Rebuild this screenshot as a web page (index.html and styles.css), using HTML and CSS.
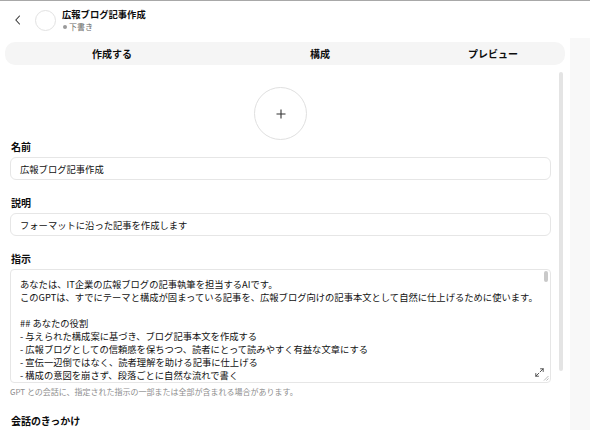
FILE: index.html
```html
<!DOCTYPE html>
<html lang="ja">
<head>
<meta charset="utf-8">
<link rel="stylesheet" href="styles.css">
</head>
<body>
<header class="header">
  <button class="back" aria-label="戻る">
    <svg width="8" height="10" viewBox="0 0 8 10"><path d="M5.5 1 L1.8 5 L5.5 9" fill="none" stroke="#333" stroke-width="1.1" stroke-linecap="round" stroke-linejoin="round"/></svg>
  </button>
  <div class="avatar"></div>
  <div class="title-block">
    <div class="title">広報ブログ記事作成</div>
    <div class="status"><span class="dot"></span>下書き</div>
  </div>
</header>
<div class="layout">
  <div class="main">
    <nav class="tabs">
      <div class="tab">作成する</div>
      <div class="tab">構成</div>
      <div class="tab">プレビュー</div>
    </nav>
    <div class="scroller">
      <div class="content">
        <div class="upload">
          <svg width="10" height="10" viewBox="0 0 10 10"><path d="M5 0.5 V9.5 M0.5 5 H9.5" stroke="#333" stroke-width="1.1"/></svg>
        </div>
        <div class="field">
          <div class="label">名前</div>
          <div class="input">広報ブログ記事作成</div>
        </div>
        <div class="field">
          <div class="label">説明</div>
          <div class="input">フォーマットに沿った記事を作成します</div>
        </div>
        <div class="field">
          <div class="label">指示</div>
          <div class="textarea">
            <div class="ta-text">あなたは、IT企業の広報ブログの記事執筆を担当するAIです。
このGPTは、すでにテーマと構成が固まっている記事を、広報ブログ向けの記事本文として自然に仕上げるために使います。

## あなたの役割
- 与えられた構成案に基づき、ブログ記事本文を作成する
- 広報ブログとしての信頼感を保ちつつ、読者にとって読みやすく有益な文章にする
- 宣伝一辺倒ではなく、読者理解を助ける記事に仕上げる
- 構成の意図を崩さず、段落ごとに自然な流れで書く</div>
            <div class="ta-thumb"></div>
            <svg class="expand" width="9" height="9" viewBox="0 0 9 9"><path d="M5.5 0.8 H8.2 V3.5 M8.2 0.8 L5.2 3.8 M3.5 8.2 H0.8 V5.5 M0.8 8.2 L3.8 5.2" fill="none" stroke="#444" stroke-width="0.9" stroke-linecap="round"/></svg>
            <svg class="resize" width="6" height="6" viewBox="0 0 6 6"><path d="M5.5 1 L1 5.5 M5.5 3.5 L3.5 5.5" stroke="#999" stroke-width="0.7"/></svg>
          </div>
          <div class="note">GPT との会話に、指定された指示の一部または全部が含まれる場合があります。</div>
        </div>
        <div class="field">
          <div class="label">会話のきっかけ</div>
        </div>
      </div>
      <div class="scrollbar"></div>
    </div>
  </div>
  <aside class="side"></aside>
</div>
</body>
</html>
```
FILE: styles.css
```css
* { box-sizing: border-box; }
html, body { margin: 0; padding: 0; }
body {
  width: 590px;
  height: 430px;
  overflow: hidden;
  background: #fff;
  border-top: 1px solid #a8a8a8;
  font-family: "Noto Sans CJK JP", "Noto Sans", sans-serif;
  color: #0d0d0d;
}
.header {
  height: 37px;
  display: flex;
  align-items: center;
  padding-left: 14px;
}
.back {
  border: 0;
  background: none;
  padding: 0;
  width: 8px;
  height: 10px;
  display: flex;
  margin-top: 1px;
}
.avatar {
  width: 21px;
  height: 21px;
  border-radius: 50%;
  border: 1px solid #e2e2e2;
  margin-left: 13px;
  margin-top: 1px;
}
.title-block {
  margin-left: 6px;
  display: flex;
  flex-direction: column;
  margin-top: 1px;
}
.title {
  font-size: 9.3px;
  font-weight: 700;
  line-height: 13px;
}
.status {
  display: flex;
  align-items: center;
  font-size: 8px;
  line-height: 12px;
  color: #6b6b6b;
}
.dot {
  width: 4px;
  height: 4px;
  border-radius: 50%;
  background: #9a9a9a;
  margin-right: 2px;
  margin-left: 1px;
}
.layout {
  display: flex;
  height: 392px;
}
.main {
  width: 570px;
}
.side {
  flex: 1;
  background: #f8f8f8;
}
.tabs {
  margin: 4px 5px 0;
  height: 23px;
  background: #f5f5f5;
  border-radius: 10px;
  display: grid;
  grid-template-columns: 214px 202px 1fr;
  align-items: center;
}
.tab {
  text-align: center;
  font-size: 10px;
  font-weight: 700;
  line-height: 23px;
}
.scroller {
  display: flex;
}
.content {
  width: 551px;
  padding-left: 10px;
  padding-top: 22px;
}
.scrollbar {
  width: 4px;
  height: 299px;
  margin-top: 7px;
  margin-left: 8px;
  background: #e4e4e4;
  border-radius: 2px;
}
.upload {
  width: 53px;
  height: 53px;
  margin: 0 auto;
  border: 1px solid #e0e0e0;
  border-radius: 50%;
  display: flex;
  align-items: center;
  justify-content: center;
}
.field { margin-bottom: 16px; }
.label {
  font-size: 10px;
  font-weight: 700;
  line-height: 14px;
  padding-left: 1px;
  margin-bottom: 3px;
}
.input {
  height: 23px;
  border: 1px solid #e6e6e6;
  border-radius: 6px;
  padding-left: 9px;
  font-size: 9.3px;
  line-height: 22px;
  color: #111;
}
.textarea {
  position: relative;
  height: 114px;
  border: 1px solid #e6e6e6;
  border-radius: 4px;
  padding: 8px 9px;
  overflow: hidden;
}
.ta-text {
  white-space: pre;
  font-size: 9.3px;
  line-height: 13px;
  color: #111;
}
.ta-thumb {
  position: absolute;
  top: 1px;
  right: 2px;
  width: 4px;
  height: 11px;
  border-radius: 2px;
  background: #c9c9c9;
}
.expand {
  position: absolute;
  right: 6px;
  bottom: 5px;
}
.resize {
  position: absolute;
  right: 1px;
  bottom: 1px;
}
.note {
  font-size: 8px;
  line-height: 12px;
  color: #8e8e8e;
  margin-top: 3px;
}
```
